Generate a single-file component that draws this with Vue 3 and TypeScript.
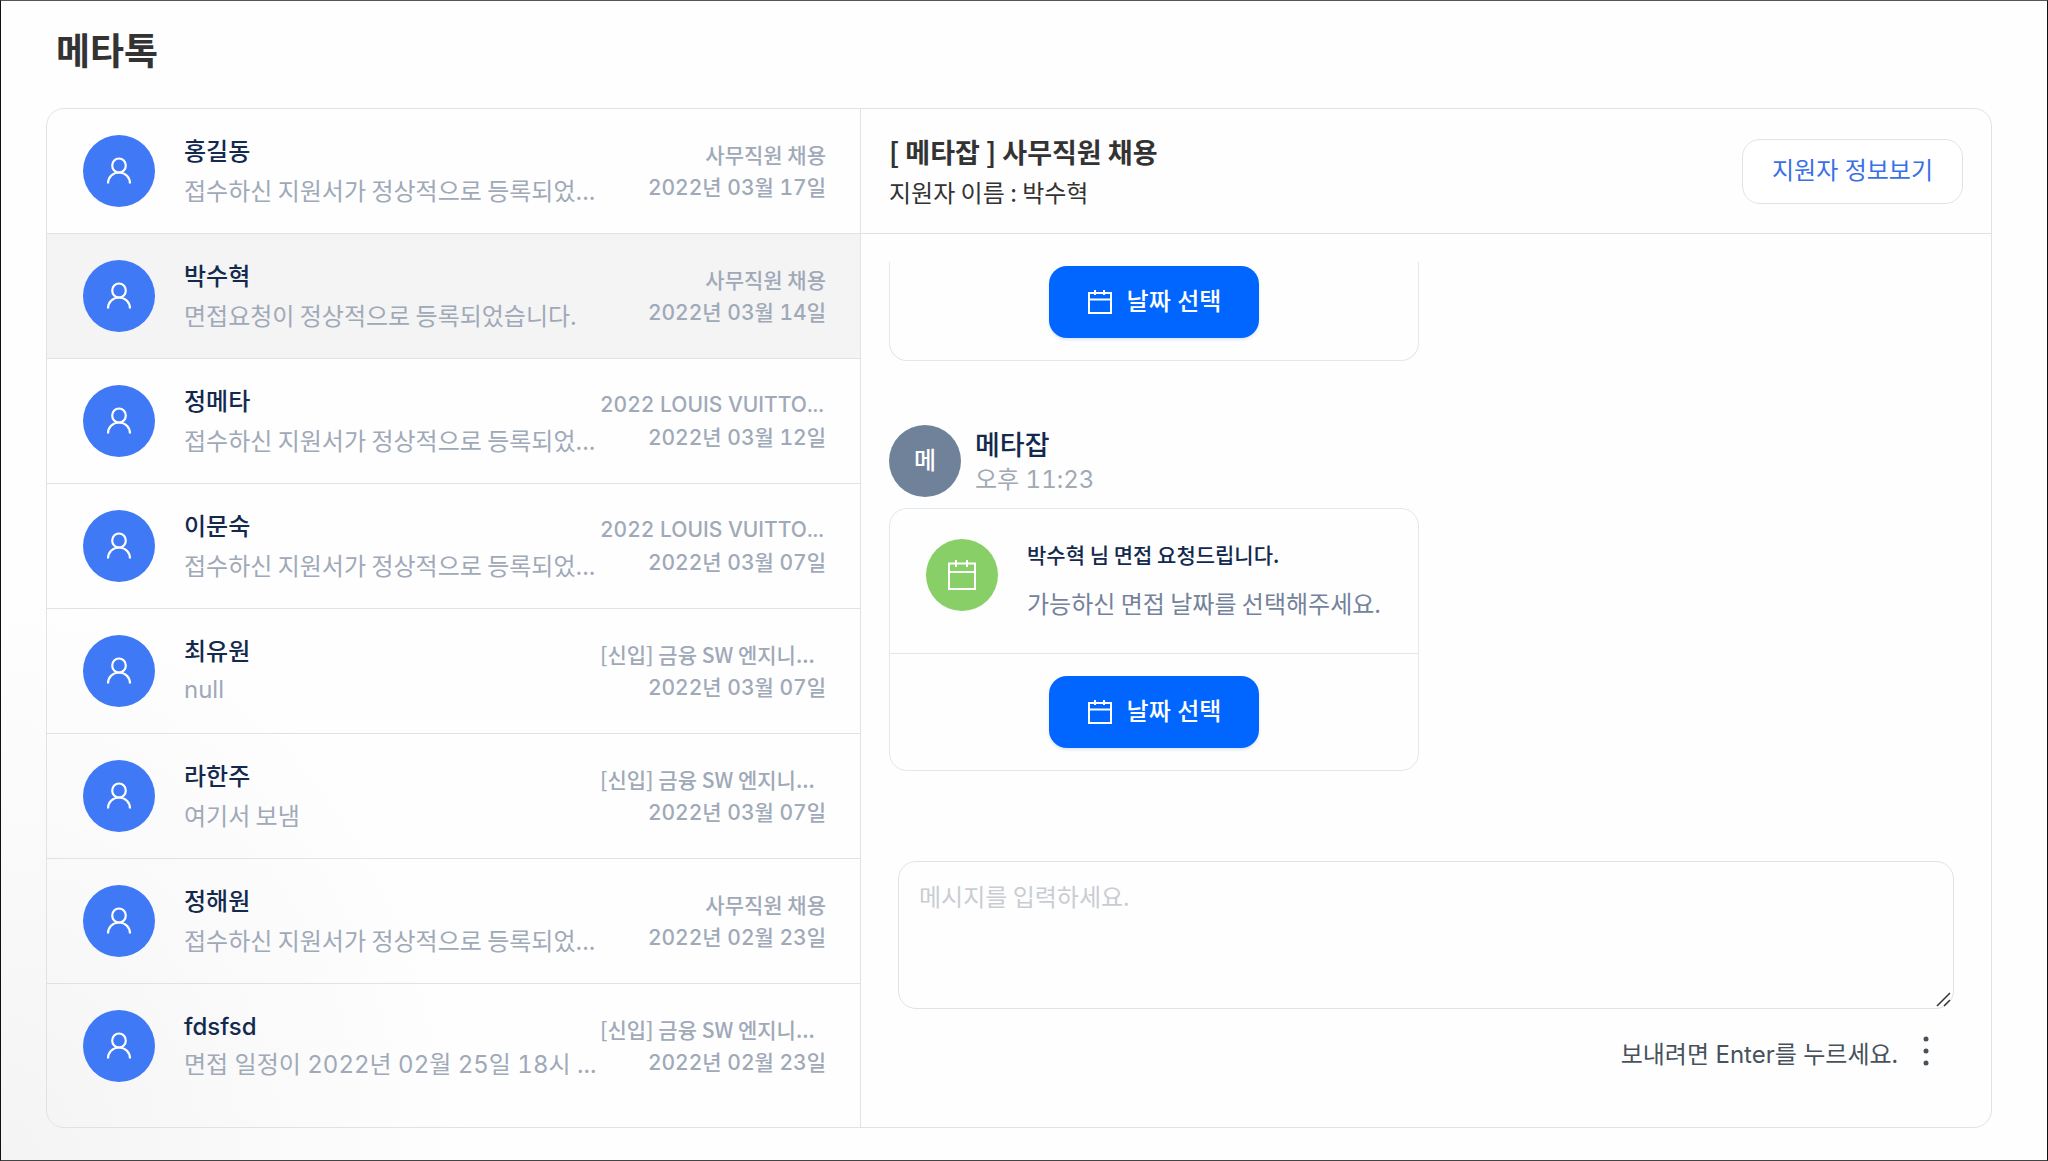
<script setup lang="ts">
import { ref } from 'vue'

interface Conversation {
  id: number
  name: string
  message: string
  job: string
  date: string
}

const conversations: Conversation[] = [
  { id: 1, name: '홍길동', message: '접수하신 지원서가 정상적으로 등록되었...', job: '사무직원 채용', date: '2022년 03월 17일' },
  { id: 2, name: '박수혁', message: '면접요청이 정상적으로 등록되었습니다.', job: '사무직원 채용', date: '2022년 03월 14일' },
  { id: 3, name: '정메타', message: '접수하신 지원서가 정상적으로 등록되었...', job: '2022 LOUIS VUITTO...', date: '2022년 03월 12일' },
  { id: 4, name: '이문숙', message: '접수하신 지원서가 정상적으로 등록되었...', job: '2022 LOUIS VUITTO...', date: '2022년 03월 07일' },
  { id: 5, name: '최유원', message: 'null', job: '[신입] 금융 SW 엔지니...', date: '2022년 03월 07일' },
  { id: 6, name: '라한주', message: '여기서 보냄', job: '[신입] 금융 SW 엔지니...', date: '2022년 03월 07일' },
  { id: 7, name: '정해원', message: '접수하신 지원서가 정상적으로 등록되었...', job: '사무직원 채용', date: '2022년 02월 23일' },
  { id: 8, name: 'fdsfsd', message: '면접 일정이 2022년 02월 25일 18시 ...', job: '[신입] 금융 SW 엔지니...', date: '2022년 02월 23일' },
]

const selectedId = ref(2)
const draft = ref('')

// Korean sentences without figures are set entirely in the Korean face.
const isKorean = (text: string): boolean => /[가-힣]/.test(text) && !/\d/.test(text)
</script>

<template>
  <main class="page">
    <h1 class="page-title">메타톡</h1>

    <div class="talk">
      <ul class="list">
        <li v-for="c in conversations" :key="c.id" class="list-item">
          <button
            type="button"
            class="row"
            :class="{ selected: c.id === selectedId }"
            @click="selectedId = c.id"
          >
            <span class="avatar avatar-user">
              <svg width="26" height="28" viewBox="0 0 26 28" fill="none" stroke="currentColor" stroke-width="2.200">
                <ellipse cx="13" cy="8.500" rx="6.800" ry="7" />
                <path d="M2 26.500C2 20.500 6.500 15.500 13 15.500s11 5 11 11" />
              </svg>
            </span>
            <span class="row-main">
              <span class="row-name">{{ c.name }}</span>
              <span class="row-message" :class="{ ko: isKorean(c.message) }">{{ c.message }}</span>
            </span>
            <span class="row-meta">
              <span class="row-job" :class="{ cut: c.job.endsWith('...'), ko: isKorean(c.job) }">{{ c.job }}</span>
              <span class="row-date">{{ c.date }}</span>
            </span>
          </button>
        </li>
      </ul>

      <section class="chat">
        <header class="chat-header">
          <div class="ko">
            <h2 class="chat-title">[ 메타잡 ] 사무직원 채용</h2>
            <p class="chat-sub">지원자 이름 : 박수혁</p>
          </div>
          <button type="button" class="info-button">지원자 정보보기</button>
        </header>

        <div class="messages">
          <article class="card card-continued">
            <div class="card-action">
              <button type="button" class="date-button">
                <svg width="26" height="26" viewBox="0 0 26 26" fill="none" stroke="currentColor" stroke-width="2">
                  <path d="M2 4h22v20H2zM2 10.500h22M8 1v5M17 1v5" />
                </svg>
                날짜 선택
              </button>
            </div>
          </article>

          <div class="sender">
            <span class="avatar avatar-company">메</span>
            <div class="sender-text">
              <p class="sender-name">메타잡</p>
              <p class="sender-time">오후 11:23</p>
            </div>
          </div>

          <article class="card">
            <div class="card-body">
              <span class="avatar avatar-calendar">
                <svg width="30" height="32" viewBox="0 0 30 32" fill="none" stroke="currentColor" stroke-width="2">
                  <path d="M2 4.500h26V30H2zM2 13h26M9 1v7M20 1v7" />
                </svg>
              </span>
              <div class="ko">
                <p class="card-title">박수혁 님 면접 요청드립니다.</p>
                <p class="card-desc">가능하신 면접 날짜를 선택해주세요.</p>
              </div>
            </div>
            <div class="card-action card-divided">
              <button type="button" class="date-button">
                <svg width="26" height="26" viewBox="0 0 26 26" fill="none" stroke="currentColor" stroke-width="2">
                  <path d="M2 4h22v20H2zM2 10.500h22M8 1v5M17 1v5" />
                </svg>
                날짜 선택
              </button>
            </div>
          </article>
        </div>

        <form class="composer" @submit.prevent>
          <div class="field">
            <textarea v-model="draft" class="input ko" aria-label="메시지" placeholder="메시지를 입력하세요."></textarea>
            <svg class="grip" width="16" height="16" viewBox="0 0 16 16" fill="none" stroke="#333" stroke-width="1.500">
              <path d="M1 15L14 2M8 15l6-6" />
            </svg>
          </div>
          <div class="composer-foot">
            <span class="hint">보내려면 Enter를 누르세요.</span>
            <button type="button" class="more" aria-label="더보기">
              <svg width="8" height="32" viewBox="0 0 8 32" fill="currentColor">
                <circle cx="4" cy="4" r="2.500" />
                <circle cx="4" cy="16" r="2.500" />
                <circle cx="4" cy="28" r="2.500" />
              </svg>
            </button>
          </div>
        </form>
      </section>
    </div>
  </main>
</template>

<style>
body {
  background: #fefefe;
}
</style>

<style scoped>
.page {
  box-sizing: border-box;
  min-height: 100vh;
  padding: 25px 55px 32px 45px;
  border: 1px solid #111;
  border-top-color: #555;
  border-bottom-color: #444;
  background: radial-gradient(ellipse 460px 560px at 0 100%, #f4f4f5, #fefefe);
  font-family: Inter, "Noto Sans CJK KR", sans-serif;
  font-size: 24px;
  font-variant-numeric: tabular-nums;
  color: #333;
}

h1,
h2,
p,
ul {
  margin: 0;
  padding: 0;
}

button {
  font-family: inherit;
  font-size: 24px;
  font-variant-numeric: inherit;
  line-height: 36px;
  cursor: pointer;
}

.page-title {
  margin: 0 10px 30px;
  font-size: 37px;
  line-height: 52px;
  font-weight: 700;
}

.talk {
  display: grid;
  grid-template-columns: minmax(0, 814fr) minmax(0, 1130fr);
  border: 1px solid #e0e3e6;
  border-radius: 18px;
  overflow: hidden;
}

.list {
  list-style: none;
  padding-bottom: 19px;
  border-right: 1px solid #e0e3e6;
}

.list-item + .list-item {
  border-top: 1px solid #e0e3e6;
}

.row {
  display: flex;
  align-items: center;
  box-sizing: border-box;
  width: 100%;
  height: 124px;
  padding: 0 34px 0 36px;
  border: 0;
  background: transparent;
  text-align: left;
}

.row.selected {
  background: #f4f4f4;
}

.avatar {
  display: flex;
  flex: none;
  align-items: center;
  justify-content: center;
  width: 72px;
  height: 72px;
  border-radius: 50%;
  color: #fff;
}

.avatar-user {
  background: #3f79f6;
}

.avatar-company {
  background: #6f8299;
  font-weight: 500;
  line-height: 36px;
}

.avatar-calendar {
  background: #88cf68;
}

.row-main {
  display: flex;
  flex: 1;
  flex-direction: column;
  min-width: 0;
  margin-left: 29px;
  line-height: 38px;
  white-space: nowrap;
}

.row-name {
  color: #132a4e;
  font-weight: 500;
}

.row-message {
  color: #a0a9b8;
}

.row-meta {
  display: flex;
  flex: none;
  flex-direction: column;
  width: 226px;
  color: #a0a9b8;
  font-size: 21px;
  font-weight: 500;
  line-height: 33px;
  text-align: right;
  white-space: nowrap;
}

.row-job.cut {
  text-align: left;
}

.chat {
  display: flex;
  flex-direction: column;
}

.chat-header {
  display: flex;
  align-items: center;
  justify-content: space-between;
  height: 124px;
  padding: 0 28px;
  border-bottom: 1px solid #e0e3e6;
}

.chat-title {
  font-size: 27px;
  line-height: 42px;
  font-weight: 700;
}

.chat-sub {
  line-height: 38px;
}

.info-button {
  width: 221px;
  height: 65px;
  border: 1px solid #e0e3e6;
  border-radius: 18px;
  background: #fff;
  color: #3970e6;
}

.messages {
  display: flex;
  flex: 1 1 0;
  flex-direction: column;
  justify-content: flex-end;
  min-height: 0;
  margin-top: 28px;
  padding: 0 28px 90px;
  overflow: hidden;
}

.card {
  flex: none;
  box-sizing: border-box;
  width: 530px;
  max-width: 100%;
  border: 1px solid #e2e7e8;
  border-radius: 18px;
}

.card-continued {
  border-top: 0;
  border-radius: 0 0 18px 18px;
}

.card-body {
  display: flex;
  gap: 29px;
  padding: 30px 36px 32px;
}

.card-title {
  margin-bottom: 16px;
  color: #132a4e;
  font-size: 21px;
  font-weight: 500;
  line-height: 30px;
}

.card-desc {
  color: #74829b;
  line-height: 36px;
  white-space: nowrap;
}

.card-action {
  display: flex;
  justify-content: center;
  padding: 22px;
}

.card-divided {
  border-top: 1px solid #e2e7e8;
}

.date-button {
  display: flex;
  align-items: center;
  justify-content: center;
  gap: 14px;
  width: 210px;
  height: 72px;
  padding: 0;
  border: 0;
  border-radius: 18px;
  background: #0066ff;
  box-shadow: 0 2px 3px rgba(0, 60, 140, 0.12);
  color: #fff;
  font-weight: 500;
}

.sender {
  display: flex;
  flex: none;
  align-items: center;
  gap: 14px;
  margin: 64px 0 11px;
}

.sender-text {
  padding-top: 4px;
}

.sender-name {
  color: #132a4e;
  font-size: 27px;
  font-weight: 500;
  line-height: 34px;
}

.sender-time {
  color: #a0a9b4;
  line-height: 34px;
}

.composer {
  padding: 0 37px 52px;
}

.field {
  position: relative;
  height: 148px;
}

.input {
  box-sizing: border-box;
  display: block;
  width: 100%;
  height: 100%;
  padding: 16px 20px;
  border: 1px solid #e0e3e6;
  border-radius: 18px;
  background: transparent;
  color: #333;
  font-family: inherit;
  font-size: 24px;
  line-height: 36px;
  resize: none;
}

.input::placeholder {
  color: #c9cdd2;
}

.grip {
  position: absolute;
  right: 2px;
  bottom: 2px;
  pointer-events: none;
}

.composer-foot {
  display: flex;
  align-items: flex-start;
  justify-content: flex-end;
  gap: 24px;
  margin-top: 26px;
  padding-right: 24px;
  color: #47525c;
}

.hint {
  line-height: 40px;
}

.more {
  display: flex;
  padding: 0;
  border: 0;
  background: transparent;
  color: #47525c;
}

.ko {
  font-family: "Noto Sans CJK KR", Inter, sans-serif;
}
</style>
